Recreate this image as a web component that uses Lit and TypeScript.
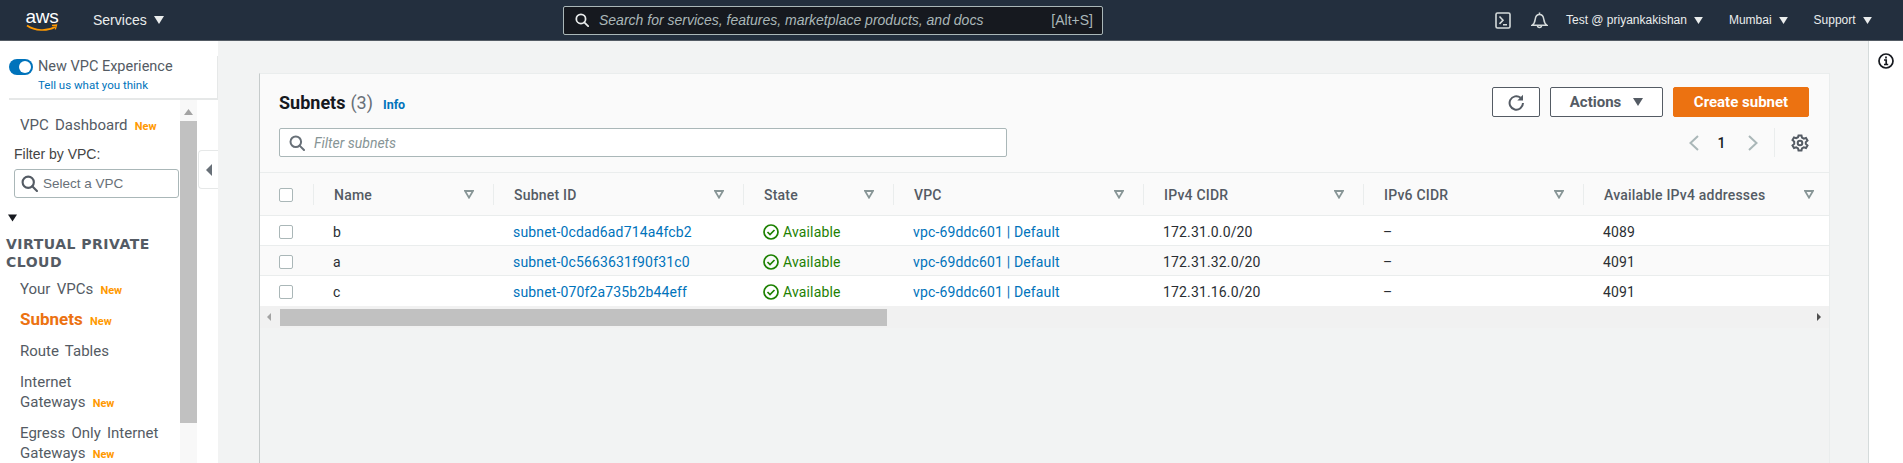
import { LitElement, html, css } from 'lit';
import { customElement } from 'lit/decorators.js';

const searchIcon = (size: number, color: string) => html`<svg class="ico" width=${size} height=${size} viewBox="0 0 16 16" fill="none" stroke=${color} stroke-width="2">
  <circle cx="6.8" cy="6.8" r="5.3"></circle><path d="M10.6 10.6 15 15" stroke-linecap="round"></path>
</svg>`;

const caret = (w: number, h: number, color: string) => html`<svg class="ico" width=${w} height=${h} viewBox="0 0 10 8"><path d="M0 0h10L5 8z" fill=${color}></path></svg>`;

const filterIcon = html`<svg class="ico" width="10" height="9" viewBox="0 0 10 9" fill="none" stroke="#879596" stroke-width="1.8"><path d="M1 1h8L5 7.6z"></path></svg>`;

const checkbox = html`<span class="check"></span>`;

const COLUMNS = ['Name', 'Subnet ID', 'State', 'VPC', 'IPv4 CIDR', 'IPv6 CIDR', 'Available IPv4 addresses'];

const ROWS = [
  { name: 'b', id: 'subnet-0cdad6ad714a4fcb2', cidr: '172.31.0.0/20', free: '4089' },
  { name: 'a', id: 'subnet-0c5663631f90f31c0', cidr: '172.31.32.0/20', free: '4091' },
  { name: 'c', id: 'subnet-070f2a735b2b44eff', cidr: '172.31.16.0/20', free: '4091' },
];

@customElement('app-root')
export class AppRoot extends LitElement {
  static styles = css`
    :host {
      display: block;
      width: 100%;
      height: 463px;
      overflow: hidden;
      position: relative;
      background: #f2f3f3;
      font-family: Roboto, sans-serif;
      font-size: 14px;
      color: #16191f;
    }
    .ico {
      display: block;
      flex: none;
    }

    /* top bar */
    .topbar {
      height: 40px;
      background: #232f3e;
      border-bottom: 1px solid #545b64;
      display: flex;
      align-items: center;
      font-family: 'Liberation Sans', Arial, sans-serif;
      color: #eaeded;
    }
    .logo {
      width: 30px;
      margin-left: 27px;
      display: flex;
      flex-direction: column;
      align-items: center;
    }
    .logo span {
      font-size: 19px;
      line-height: 15px;
      color: #fff;
      letter-spacing: -0.3px;
    }
    .services {
      margin-left: 36px;
      width: 71px;
      display: flex;
      align-items: center;
      gap: 7px;
    }
    .search {
      margin-left: 399px;
      width: 540px;
      height: 29px;
      box-sizing: border-box;
      background: #16191f;
      border: 1px solid #aab7b8;
      border-radius: 2px;
      display: flex;
      align-items: center;
      padding: 0 9px 0 11px;
      color: #aab7b8;
    }
    .search em {
      margin-left: 10px;
      flex: 1;
    }
    .top-right {
      margin-left: 392px;
      display: flex;
      align-items: center;
      font-size: 12px;
    }
    .menu {
      display: flex;
      align-items: center;
      gap: 7px;
    }

    /* page split */
    .body {
      display: flex;
      height: 422px;
    }
    .side {
      width: 218px;
      flex: none;
      background: #fff;
      display: flex;
      flex-direction: column;
      color: #545b64;
    }
    .side-top {
      height: 57px;
      margin-left: 9px;
      border-bottom: 2px solid #e6e8e8;
      position: relative;
    }
    .side-top::after {
      content: '';
      position: absolute;
      right: 0;
      top: 15px;
      bottom: 0;
      border-right: 1px solid #e6e8e8;
    }
    .toggle-row {
      display: flex;
      align-items: center;
      gap: 5px;
      padding-top: 18px;
      font-size: 14.5px;
      line-height: 16px;
    }
    .toggle {
      width: 24px;
      height: 16px;
      border-radius: 8px;
      background: #0073bb;
      display: flex;
      justify-content: flex-end;
      align-items: center;
      padding-right: 2px;
      box-sizing: border-box;
    }
    .toggle i {
      width: 12px;
      height: 12px;
      border-radius: 50%;
      background: #fff;
    }
    .tell {
      margin: 3px 0 0 29px;
      font-size: 11.5px;
      line-height: 14px;
      color: #0073bb;
    }
    .side-scroll {
      flex: 1;
      display: flex;
      width: 197px;
      min-height: 0;
    }
    .nav {
      width: 180px;
      overflow: hidden;
      padding-top: 15px;
      box-sizing: border-box;
      font-size: 15px;
      line-height: 20px;
      word-spacing: 2.5px;
    }
    .new {
      color: #ff9900;
      font-size: 11px;
      font-weight: 700;
      line-height: 1;
      margin-left: 1px;
      word-spacing: 0;
    }
    .nav-item {
      padding-left: 20px;
    }
    .filter-label {
      margin: 9px 0 0 14px;
      font-family: 'Liberation Sans', Arial, sans-serif;
      font-size: 14px;
      word-spacing: 0;
      color: #444;
    }
    .vpc-select {
      margin: 5px 0 0 14px;
      width: 165px;
      height: 29px;
      box-sizing: border-box;
      border: 1px solid #aab7b8;
      border-radius: 3px;
      display: flex;
      align-items: center;
      gap: 5px;
      padding-left: 6px;
      font-family: 'Liberation Sans', Arial, sans-serif;
      font-size: 13.5px;
      word-spacing: 0;
      color: #687078;
    }
    .tree-caret {
      margin: 16px 0 0 8px;
    }
    .heading {
      margin: 13px 0 0 6px;
      font-family: 'DejaVu Sans', sans-serif;
      font-size: 14px;
      font-weight: 700;
      line-height: 18px;
      letter-spacing: 0.5px;
      word-spacing: 0;
    }
    .links {
      display: flex;
      flex-direction: column;
      gap: 11px;
      margin-top: 8px;
    }
    .active {
      color: #ec7211;
      font-size: 17px;
      font-weight: 700;
      line-height: 1;
    }
    .vbar {
      width: 17px;
      background: #f8f8f8;
      display: flex;
      flex-direction: column;
      align-items: center;
    }
    .vbar svg {
      margin: 9px 0 6px;
    }
    .vbar div {
      width: 100%;
      height: 302px;
      background: #c1c1c1;
    }
    .collapse {
      position: absolute;
      left: 198px;
      top: 150px;
      width: 20px;
      height: 39px;
      box-sizing: border-box;
      background: #fff;
      border: 1px solid #e6e8e8;
      border-right: none;
      border-radius: 4px 0 0 4px;
      display: flex;
      align-items: center;
      justify-content: center;
    }

    /* content */
    .main {
      flex: 1;
      min-width: 0;
      padding: 32px 38px 0 41px;
    }
    .card {
      height: 100%;
      box-sizing: border-box;
      border: 1px solid #eaeded;
      border-left-color: #c6cbcb;
      border-bottom: none;
      overflow: hidden;
    }
    .card-head {
      height: 99px;
      background: #fafafa;
      box-sizing: border-box;
      padding: 13px 20px 0 19px;
      border-bottom: 1px solid #eaeded;
    }
    .head-row {
      display: flex;
      align-items: center;
      height: 30px;
    }
    .title {
      font-size: 18px;
      font-weight: 700;
      padding-top: 1px;
    }
    .count {
      font-size: 18px;
      color: #687078;
      margin-left: 5px;
      padding-top: 1px;
    }
    .info {
      margin-left: 10px;
      padding-top: 4px;
      font-size: 12.5px;
      font-weight: 700;
      color: #0073bb;
    }
    .spacer {
      flex: 1;
    }
    .btn {
      height: 30px;
      box-sizing: border-box;
      border: 1px solid #545b64;
      border-radius: 2px;
      background: #fff;
      color: #545b64;
      font-size: 15px;
      font-weight: 700;
      display: flex;
      align-items: center;
      justify-content: center;
    }
    .refresh {
      width: 48px;
    }
    .actions {
      width: 113px;
      margin-left: 10px;
      gap: 12px;
    }
    .create {
      width: 136px;
      margin-left: 10px;
      background: #ec7211;
      border-color: #ec7211;
      color: #fff;
    }
    .filter-row {
      display: flex;
      align-items: center;
      margin-top: 11px;
      height: 29px;
    }
    .filter {
      width: 728px;
      height: 29px;
      box-sizing: border-box;
      background: #fff;
      border: 1px solid #aab7b8;
      border-radius: 2px;
      display: flex;
      align-items: center;
      gap: 9px;
      padding-left: 9px;
      color: #879596;
      font-style: italic;
    }
    .pager {
      display: flex;
      align-items: center;
      height: 29px;
    }
    .page-num {
      width: 49px;
      box-sizing: border-box;
      padding-right: 4px;
      text-align: center;
      font-weight: 500;
    }
    .pager-sep {
      width: 1px;
      height: 29px;
      background: #eaeded;
      margin: 0 16px;
    }
    .grid {
      display: grid;
      grid-template-columns: 53px 180px 250px 150px 250px 220px 220px 246px;
    }
    .thead {
      height: 43px;
      background: #fafafa;
      border-bottom: 1px solid #eaeded;
      box-sizing: border-box;
      align-items: center;
      padding-top: 1px;
      font-weight: 500;
      letter-spacing: 0.2px;
      color: #545b64;
    }
    .th {
      height: 21px;
      border-left: 1px solid #eaeded;
      padding: 0 19px 0 20px;
      display: flex;
      align-items: center;
      justify-content: space-between;
      white-space: nowrap;
    }
    .th:last-child {
      padding-right: 15px;
    }
    .cell-check {
      padding-left: 19px;
    }
    .tr {
      height: 30px;
      background: #fff;
      border-bottom: 1px solid #eaeded;
      box-sizing: border-box;
      align-items: center;
      padding-top: 2px;
      white-space: nowrap;
      letter-spacing: 0.15px;
      color: #2a2e33;
    }
    .tr.alt {
      background: #fafafa;
    }
    .tr.last {
      border-bottom: none;
      padding-top: 1px;
    }
    .td {
      padding-left: 20px;
    }
    .check {
      display: block;
      width: 14px;
      height: 14px;
      box-sizing: border-box;
      background: #fff;
      border: 1px solid #aab7b8;
      border-radius: 2px;
    }
    a {
      color: #0073bb;
      text-decoration: none;
    }
    .state {
      display: flex;
      align-items: center;
      gap: 4px;
      color: #1d8102;
    }
    .hbar {
      height: 22px;
      background: #f1f1f1;
      display: flex;
      align-items: center;
      padding: 0 8px 0 7px;
    }
    .hbar .thumb {
      width: 607px;
      height: 17px;
      margin-left: 9px;
      background: #c1c1c1;
    }
    .panel {
      width: 35px;
      flex: none;
      background: #fff;
      border-left: 1px solid #d5dbdb;
      box-sizing: border-box;
      display: flex;
      justify-content: center;
      padding-top: 12px;
    }
  `;

  private renderHeader() {
    return html`<header class="topbar">
      <div class="logo">
        <span>aws</span>
        <svg class="ico" width="32" height="8" viewBox="0 0 32 8" fill="none">
          <path d="M1 1.5C9 7 21 7.5 29 3" stroke="#ff9900" stroke-width="1.6"></path>
          <path d="M26 1.5l4.5-.5-1.2 4.4" stroke="#ff9900" stroke-width="1.3"></path>
        </svg>
      </div>
      <div class="services">Services ${caret(10, 8, '#eaeded')}</div>
      <div class="search">
        ${searchIcon(14, '#eaeded')}
        <em>Search for services, features, marketplace products, and docs</em>
        <span>[Alt+S]</span>
      </div>
      <div class="top-right">
        <svg class="ico" width="16" height="17" viewBox="0 0 16 17" fill="none" stroke="#d5dbdb" stroke-width="1.6">
          <rect x="1" y="1" width="14" height="15" rx="1.5"></rect>
          <path d="M4.500 4.500 8 8.200l-3.500 3.700M8 12.800h4"></path>
        </svg>
        <svg class="ico" style="margin-left:20px" width="17" height="17" viewBox="0 0 17 17" fill="none" stroke="#d5dbdb" stroke-width="1.5">
          <path d="M1 13.300c2.200-1.300 2.800-3.200 3.200-6C4.600 4.400 6.200 2.600 8.500 2.600s3.900 1.800 4.300 4.700c.4 2.800 1 4.700 3.200 6z"></path>
          <path d="M8.500.5v2M6.500 13.500a2 2 0 0 0 4 0"></path>
        </svg>
        <div class="menu" style="margin-left:18px">Test @ priyankakishan ${caret(9, 7, '#eaeded')}</div>
        <div class="menu" style="margin-left:26px">Mumbai ${caret(9, 7, '#eaeded')}</div>
        <div class="menu" style="margin-left:26px">Support ${caret(9, 7, '#eaeded')}</div>
      </div>
    </header>`;
  }

  private renderSidebar() {
    return html`<aside class="side">
      <div class="side-top">
        <div class="toggle-row"><span class="toggle"><i></i></span>New VPC Experience</div>
        <div class="tell">Tell us what you think</div>
      </div>
      <div class="side-scroll">
        <nav class="nav">
          <div class="nav-item">VPC Dashboard <span class="new">New</span></div>
          <div class="filter-label">Filter by VPC:</div>
          <div class="vpc-select">${searchIcon(17, '#545b64')} Select a VPC</div>
          <div class="tree-caret">${caret(9, 8, '#16191f')}</div>
          <div class="heading">VIRTUAL PRIVATE CLOUD</div>
          <div class="links">
            <div class="nav-item">Your VPCs <span class="new">New</span></div>
            <div class="nav-item"><span class="active">Subnets</span> <span class="new">New</span></div>
            <div class="nav-item">Route Tables</div>
            <div class="nav-item">Internet<br />Gateways <span class="new">New</span></div>
            <div class="nav-item">Egress Only Internet<br />Gateways <span class="new">New</span></div>
          </div>
        </nav>
        <div class="vbar">
          <svg class="ico" width="9" height="6" viewBox="0 0 9 6"><path d="M4.500 0 9 6H0z" fill="#a3a3a3"></path></svg>
          <div></div>
        </div>
      </div>
    </aside>
    <div class="collapse">
      <svg class="ico" width="6" height="12" viewBox="0 0 6 12"><path d="M6 0v12L0 6z" fill="#687078"></path></svg>
    </div>`;
  }

  private renderTable() {
    return html`<div class="grid thead">
        <div class="cell-check">${checkbox}</div>
        ${COLUMNS.map((c) => html`<div class="th"><span>${c}</span>${filterIcon}</div>`)}
      </div>
      ${ROWS.map(
        (r, i) => html`<div class="grid tr ${i === 1 ? 'alt' : ''} ${i === 2 ? 'last' : ''}">
          <div class="cell-check">${checkbox}</div>
          <div class="td">${r.name}</div>
          <div class="td"><a>${r.id}</a></div>
          <div class="td state">
            <svg class="ico" width="16" height="16" viewBox="0 0 16 16" fill="none" stroke="#1d8102" stroke-width="1.700">
              <circle cx="8" cy="8" r="7"></circle><path d="M4.500 8l2.500 2.500 4.500-4.500"></path>
            </svg>
            Available
          </div>
          <div class="td"><a>vpc-69ddc601 | Default</a></div>
          <div class="td">${r.cidr}</div>
          <div class="td">–</div>
          <div class="td">${r.free}</div>
        </div>`,
      )}
      <div class="hbar">
        <svg class="ico" width="4" height="8" viewBox="0 0 4 8"><path d="M4 0v8L0 4z" fill="#a3a3a3"></path></svg>
        <div class="thumb"></div>
        <div class="spacer"></div>
        <svg class="ico" width="4" height="8" viewBox="0 0 4 8"><path d="M0 0v8l4-4z" fill="#505050"></path></svg>
      </div>`;
  }

  render() {
    return html`
      ${this.renderHeader()}
      <div class="body">
        ${this.renderSidebar()}
        <main class="main">
          <section class="card">
            <div class="card-head">
              <div class="head-row">
                <span class="title">Subnets</span><span class="count">(3)</span><span class="info">Info</span>
                <div class="spacer"></div>
                <div class="btn refresh">
                  <svg class="ico" width="17" height="17" viewBox="0 0 17 17" fill="none">
                    <path d="M12.600 3.800A6.700 6.700 0 1 0 15 9" stroke="#545b64" stroke-width="2"></path>
                    <path d="M15 .8V6.500H9.300z" fill="#545b64"></path>
                  </svg>
                </div>
                <div class="btn actions">Actions ${caret(10, 8, '#545b64')}</div>
                <div class="btn create">Create subnet</div>
              </div>
              <div class="filter-row">
                <div class="filter">${searchIcon(16, '#687078')}<span>Filter subnets</span></div>
                <div class="spacer"></div>
                <div class="pager">
                  <svg class="ico" width="10" height="16" viewBox="0 0 10 16" fill="none" stroke="#aab7b8" stroke-width="2"><path d="M9 1 1.500 8 9 15"></path></svg>
                  <span class="page-num">1</span>
                  <svg class="ico" width="10" height="16" viewBox="0 0 10 16" fill="none" stroke="#aab7b8" stroke-width="2"><path d="M1 1l7.500 7L1 15"></path></svg>
                  <div class="pager-sep"></div>
                  <svg class="ico" width="18" height="18" viewBox="0 0 18 18" fill="none" stroke="#545b64" stroke-width="2">
                    <circle cx="9" cy="9" r="2.300"></circle>
                    <path d="M7.500 1.500h3l.5 2.200 1.800 1 2.200-.7 1.500 2.600-1.700 1.500v1.800l1.700 1.500-1.500 2.600-2.200-.7-1.800 1-.5 2.200h-3l-.5-2.200-1.800-1-2.200.7-1.500-2.600 1.700-1.500V7.600L1.500 6.100 3 3.500l2.200.7 1.800-1z"></path>
                  </svg>
                </div>
              </div>
            </div>
            ${this.renderTable()}
          </section>
        </main>
        <div class="panel">
          <svg class="ico" width="16" height="16" viewBox="0 0 16 16" fill="none" stroke="#16191f" stroke-width="1.700">
            <circle cx="8" cy="8" r="7"></circle><path d="M6 7h2.200v4.500M6 11.500h4.200M8 3.600v2"></path>
          </svg>
        </div>
      </div>
    `;
  }
}

declare global {
  interface HTMLElementTagNameMap {
    'app-root': AppRoot;
  }
}
